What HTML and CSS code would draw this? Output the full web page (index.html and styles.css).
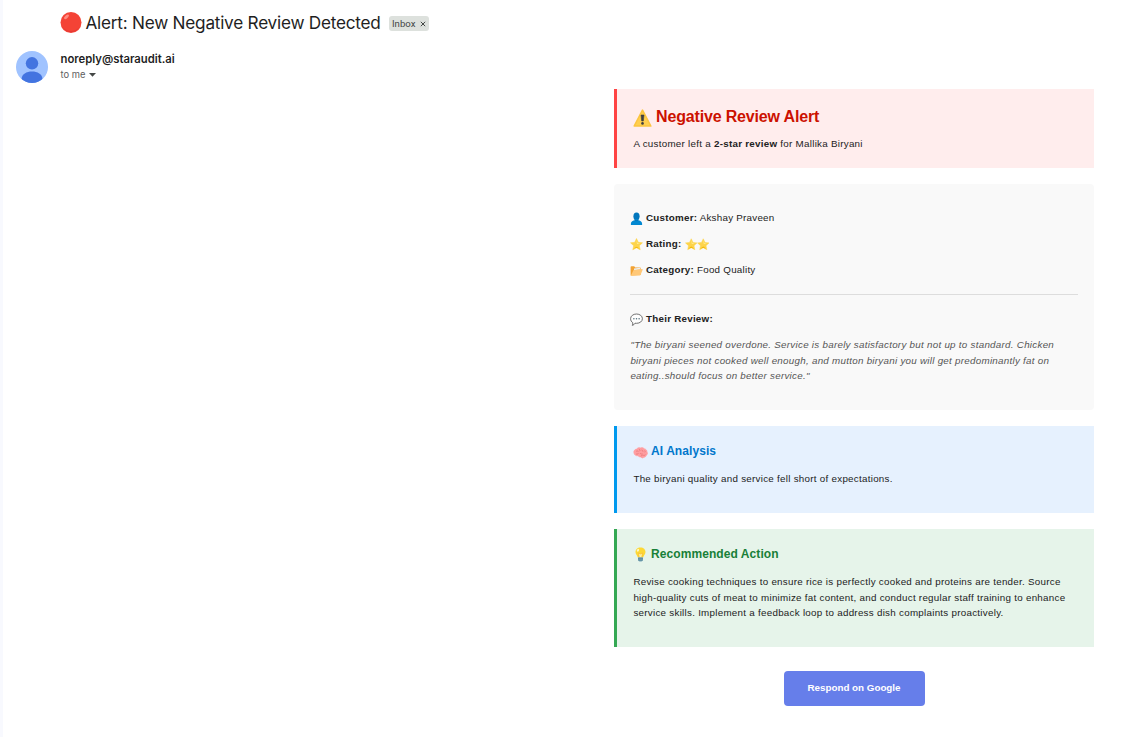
FILE: index.html
```
<!DOCTYPE html>
<html lang="en">
<head>
<meta charset="utf-8">
<title>Alert: New Negative Review Detected</title>
<link rel="stylesheet" href="styles.css">
</head>
<body>
<svg class="defs" aria-hidden="true">
  <defs>
    <symbol id="star" viewBox="0 0 24 24">
      <path d="M12 1l3.300 7 7.700.9-5.700 5.300 1.500 7.700L12 18.100l-6.800 3.800 1.500-7.700L1 8.900 8.700 8z" fill="#fdd44b" stroke="#fdd44b" stroke-width="1" stroke-linejoin="round"/>
      <path d="M12 3l2 6 5 1-6 1z" fill="#ffee94"/><path d="M6 20l6-4 6 4-6-2z" fill="#f4b400"/>
    </symbol>
  </defs>
</svg>
<main class="mail">
  <header class="subject">
    <svg class="dot" viewBox="0 0 22 22"><circle cx="11" cy="10.500" r="10.500" fill="#f44336"/><path d="M2.500 15a9.600 9.600 0 0 0 17 0A11 11 0 0 1 2.500 15" fill="#e53935"/><ellipse cx="6.500" cy="4.800" rx="3" ry="1.500" transform="rotate(-40 6.500 4.800)" fill="#ff8a80"/></svg>
    <h1 class="subject-text">Alert: New Negative Review Detected</h1>
    <span class="tag"><span class="tag-text">Inbox</span><svg class="tag-x" viewBox="0 0 6 6"><path d="M.8.8l4.400 4.400M5.200.8L.8 5.200" stroke="#444746" stroke-width="1"/></svg></span>
  </header>
  <div class="sender">
    <svg class="avatar" viewBox="0 0 32 32"><clipPath id="round"><circle cx="16" cy="16" r="16"/></clipPath><g clip-path="url(#round)"><rect width="32" height="32" fill="#a0c3ff"/><circle cx="16" cy="12.300" r="6.200" fill="#4374e0"/><path d="M5.600 28c0-5 5-7.500 10.400-7.500S26.400 23 26.400 28v4H5.600z" fill="#4374e0"/></g></svg>
    <div class="sender-info">
      <div class="from">noreply@staraudit.ai</div>
      <div class="to"><span class="to-text">to me</span><svg class="caret" viewBox="0 0 7 4"><path d="M0 0h7L3.500 3.800z" fill="#444746"/></svg></div>
    </div>
  </div>

  <article class="content">
    <section class="card alert">
      <h2 class="alert-title"><svg class="i-warn" viewBox="0 0 19 18"><path d="M9.500 1.200L17.800 17H1.200z" fill="#ffcf4f" stroke="#fcc540" stroke-width="1.600" stroke-linejoin="round"/><path d="M8 6h3l-.7 6H8.700z" fill="#3f3f3f" stroke="#3f3f3f" stroke-width=".6" stroke-linejoin="round"/><circle cx="9.500" cy="14.400" r="1.300" fill="#3f3f3f"/></svg><span>Negative Review Alert</span></h2>
      <p class="copy">A customer left a <b>2-star review</b> for Mallika Biryani</p>
    </section>

    <section class="card details">
      <p class="field"><svg class="icon" viewBox="0 0 13 13"><ellipse cx="6.500" cy="4.300" rx="3.100" ry="3.900" fill="#0277bd"/><path d="M.9 13v-1.500C.9 9.500 3 8.500 5 8.200V7h3v1.200c2 .3 4.100 1.300 4.100 3.300V13z" fill="#0288d1"/><path d="M4.500 7c1 1.500 3 1.500 4 0v1.500c-1 1-3 1-4 0z" fill="#0277bd"/></svg><span><b>Customer:</b> Akshay Praveen</span></p>
      <p class="field"><svg class="icon"><use href="#star"/></svg><span><b>Rating:</b></span><span class="stars"><svg class="icon"><use href="#star"/></svg><svg class="icon"><use href="#star"/></svg></span></p>
      <p class="field"><svg class="icon" viewBox="0 0 13 13"><path d="M.6 11.500V3c0-.5.3-.8.8-.8h2.800l1 1.200h4.800c.5 0 .8.300.8.8v6.500z" fill="#f2a233"/><path d="M4 4.600l6-.8.6 1.600-6.600.8z" fill="#eceff1"/><path d="M.7 11.900l2.600-5.300c.1-.3.300-.4.600-.5l8.300-1c.4 0 .6.300.5.600l-2.200 5.200c-.1.300-.4.500-.7.500z" fill="#ffc878"/></svg><span><b>Category:</b> Food Quality</span></p>
      <hr class="rule">
      <p class="field"><svg class="icon" viewBox="0 0 13 13"><path d="M6.500 1C9.800 1 12.400 3 12.400 5.700S9.800 10.300 6.500 10.300l-1.500-.1c-.5 1-1.300 1.900-2.700 2.200.5-.8.7-1.800.4-2.800C1.400 8.800.6 7.400.6 5.700.6 3 3.200 1 6.500 1z" fill="#fff" stroke="#616161" stroke-width=".9"/><g fill="#546e7a"><circle cx="3.900" cy="5.700" r=".75"/><circle cx="6.500" cy="5.700" r=".75"/><circle cx="9.100" cy="5.700" r=".75"/></g></svg><span><b>Their Review:</b></span></p>
      <p class="copy quote">"The biryani seened overdone. Service is barely satisfactory but not up to standard. Chicken<br>biryani pieces not cooked well enough, and mutton biryani you will get predominantly fat on<br>eating..should focus on better service."</p>
    </section>

    <section class="card analysis">
      <h3 class="title"><svg class="i-brain" viewBox="0 0 15 12"><path d="M1 6C.4 3.800 2 2.200 3.700 2.100 4.600.7 6.500.5 7.500 1c1.400-.7 3.200-.2 3.900.9 1.600.2 2.700 1.600 2.500 3 .9 1.200.5 2.900-.7 3.400-.2 1.300-1.300 2-2.400 1.900-.7 1-2.200.9-2.800-.3-1.600.1-2.500-.5-3-1.200C3 9 1.200 7.800 1 6z" fill="#ff9da0" stroke="#ff9da0" stroke-width=".8"/><path d="M3 4.500c1-.9 2-.6 2.500.2M6 2.200c1 .4 1.200 1.200.6 2M8.500 3c1 .1 1.600.8 1.400 1.800M11.500 3.500c.8.5.8 1.300.3 1.800M3 7c1.200.4 2.200 0 2.500-1M7 6c.4 1 1.500 1.300 2.500.8M8 9.500c0-1 1-1.600 2-1.300s2 .2 2.500-.6" fill="none" stroke="#e57373" stroke-width=".7"/></svg><span>AI Analysis</span></h3>
      <p class="copy">The biryani quality and service fell short of expectations.</p>
    </section>

    <section class="card action">
      <h3 class="title"><svg class="i-bulb" viewBox="0 0 15 15"><path d="M7.500.5c3 0 5 2.100 5 4.600 0 2.300-1.800 3.300-2.300 5.400H4.800c-.5-2.100-2.300-3.100-2.300-5.400C2.500 2.600 4.500.5 7.500.5z" fill="#fdd835"/><path d="M6.300 10.500L5.500 6l2 1 2-1-.8 4.500z" fill="#fff59d" stroke="#f9a825" stroke-width=".5"/><ellipse cx="5" cy="3.300" rx="1" ry="1.500" transform="rotate(30 5 3.300)" fill="#fff9c4"/><path d="M5 10.300h5v2.400c0 1-1 1.900-2.500 1.900S5 13.700 5 12.700z" fill="#78a5b8"/><path d="M5 11.700h5M5.300 13.200h4.400" stroke="#4e7d91" stroke-width=".6"/></svg><span>Recommended Action</span></h3>
      <p class="copy">Revise cooking techniques to ensure rice is perfectly cooked and proteins are tender. Source<br>high-quality cuts of meat to minimize fat content, and conduct regular staff training to enhance<br>service skills. Implement a feedback loop to address dish complaints proactively.</p>
    </section>

    <a class="respond">Respond on Google</a>
  </article>
</main>
</body>
</html>
```
FILE: styles.css
```
* { box-sizing: border-box; }
body { margin: 0; background: #fff; color: #222; font-family: "Liberation Sans", Arial, sans-serif; }
h1, h2, h3, p { margin: 0; }
svg { display: block; flex: none; }
.defs { position: absolute; width: 0; height: 0; }
.mail { height: 737px; border-left: 3px solid #f8f9fe; padding-top: 12px; overflow: hidden; }

.subject { display: flex; align-items: center; height: 22px; padding-left: 57px; }
.dot { width: 22px; height: 22px; }
.subject-text { margin-left: 3.5px; font: 400 17.2px/22px Inter, sans-serif; letter-spacing: -0.24px; color: #1f1f1f; white-space: nowrap; width: 296.5px; }
.tag { display: flex; align-items: center; width: 40px; height: 15px; margin-left: 7px; padding-left: 3px; border-radius: 3px; background: #dde1dd; color: #444746; font: 9.6px/15px Roboto, sans-serif; }
.tag-text { width: 28px; }
.tag-x { width: 6px; height: 6px; margin-top: 1px; }

.sender { display: flex; padding: 17px 0 0 13px; height: 55px; }
.avatar { width: 32px; height: 32px; }
.sender-info { padding-left: 12.5px; }
.from { font: 600 11.3px/16px Inter, sans-serif; color: #1f1f1f; }
.to { display: flex; align-items: center; font: 9.4px/16px Inter, sans-serif; color: #5e5e5e; }
.to-text { width: 28.5px; }
.caret { width: 7px; height: 4px; }

.content { display: flex; flex-direction: column; width: 480px; margin-left: 611px; }
.card { margin-bottom: 16px; }
.copy { padding-left: 0.4px; font-size: 9.8px; line-height: 15.6px; letter-spacing: 0.27px; white-space: nowrap; }
.alert { height: 79px; padding: 16px 16px 0; border-left: 3px solid #ff4444; background: #ffeded; }
.alert-title { display: flex; align-items: center; gap: 4px; height: 23px; color: #cc1100; font-size: 16px; line-height: 23px; letter-spacing: -0.16px; white-space: nowrap; }
.i-warn { width: 19px; height: 18px; margin-top: 3px; }
.alert .copy { margin-top: 8px; }

.details { height: 226px; padding: 25px 16px 0; border-radius: 4px; background: #f9f9f9; }
.field { display: flex; align-items: center; gap: 3px; height: 16px; margin-bottom: 10px; font-size: 9.8px; letter-spacing: 0.25px; white-space: nowrap; }
.icon { width: 13px; height: 13px; margin-top: 3px; }
.stars { display: flex; }
.stars .icon { width: 12.5px; }
.rule { height: 1px; margin: 17px 0 15px; border: 0; background: #ddd; }
.quote { margin-top: 11px; color: #555; font-style: italic; }

.analysis { height: 87px; padding: 17px 16px 0; border-left: 3px solid #0099ee; background: #e6f1fe; }
.title { display: flex; align-items: center; gap: 3px; height: 17px; margin-bottom: 11px; font-size: 12px; line-height: 17px; letter-spacing: 0.08px; white-space: nowrap; }
.analysis .title { color: #0077cc; }
.i-brain { width: 15px; height: 12px; margin-top: 2px; }
.action { height: 118px; padding: 17px 16px 0; border-left: 3px solid #34a853; background: #e6f4ea; }
.action .title { color: #188038; }
.i-bulb { width: 15px; height: 15px; }
.respond { align-self: center; width: 141px; height: 35px; margin-top: 8px; border-radius: 4px; background: #667eea; color: #fff; font-size: 9.8px; font-weight: 700; line-height: 34px; text-align: center; }
```
